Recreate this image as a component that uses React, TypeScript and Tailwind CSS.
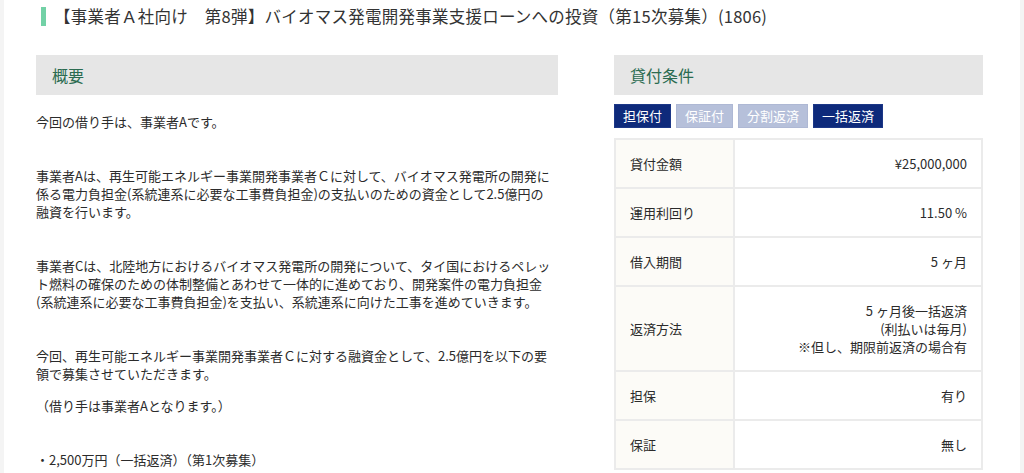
import React from 'react';

interface Term {
  label: string;
  value: React.ReactNode;
}

const tags = [
  { name: '担保付', on: true },
  { name: '保証付', on: false },
  { name: '分割返済', on: false },
  { name: '一括返済', on: true },
];

const terms: Term[] = [
  { label: '貸付金額', value: '¥25,000,000' },
  { label: '運用利回り', value: '11.50 %' },
  { label: '借入期間', value: '5 ヶ月' },
  {
    label: '返済方法',
    value: (
      <>
        5 ヶ月後一括返済
        <br />
        (利払いは毎月)
        <br />
        ※但し、期限前返済の場合有
      </>
    ),
  },
  { label: '担保', value: '有り' },
  { label: '保証', value: '無し' },
];

const SectionHead: React.FC<{ title: string }> = ({ title }) => (
  <div className="h-[40px] bg-[#e6e6e6] pl-4 flex items-center text-[16px] text-[#2b6b50]">{title}</div>
);

// lines are broken by hand so they wrap where the original page does
const Lines: React.FC<{ lines: string[]; className?: string }> = ({ lines, className = '' }) => (
  <p className={`whitespace-nowrap ${className}`}>
    {lines.map((l, i) => (
      <React.Fragment key={i}>
        {i > 0 && <br />}
        {l}
      </React.Fragment>
    ))}
  </p>
);

export default function App() {
  return (
    <div
      className="w-[1024px] h-[473px] overflow-hidden bg-[#f4f4f4] px-[4px] text-[#2b2b2b]"
      style={{ fontFamily: '"Noto Sans CJK JP", "Noto Sans", sans-serif' }}
    >
      <div className="h-full bg-white pl-[32px] pr-[37px]">
        {/* title */}
        <div className="flex items-center h-[32px] pl-[5px]">
          <div className="w-[5px] h-[19px] bg-[#72d1a6] mr-[8px]" />
          <h1 className="text-[16.5px] leading-[20px] tracking-[0.25px] text-[#333] whitespace-nowrap">
            【事業者Ａ社向け　第8弾】バイオマス発電開発事業支援ローンへの投資（第15次募集）(1806)
          </h1>
        </div>

        <div className="flex gap-[56px] mt-[23px]">
          {/* overview */}
          <div className="w-[522px] text-[13px] leading-[18px]">
            <SectionHead title="概要" />
            <p className="mt-[18px]">今回の借り手は、事業者Aです。</p>
            <Lines
              className="mt-[36px]"
              lines={[
                '事業者Aは、再生可能エネルギー事業開発事業者Ｃに対して、バイオマス発電所の開発に',
                '係る電力負担金(系統連系に必要な工事費負担金)の支払いのための資金として2.5億円の',
                '融資を行います。',
              ]}
            />
            <Lines
              className="mt-[36px]"
              lines={[
                '事業者Cは、北陸地方におけるバイオマス発電所の開発について、タイ国におけるペレッ',
                'ト燃料の確保のための体制整備とあわせて一体的に進めており、開発案件の電力負担金',
                '(系統連系に必要な工事費負担金)を支払い、系統連系に向けた工事を進めていきます。',
              ]}
            />
            <Lines
              className="mt-[36px]"
              lines={[
                '今回、再生可能エネルギー事業開発事業者Ｃに対する融資金として、2.5億円を以下の要',
                '領で募集させていただきます。',
              ]}
            />
            <p className="mt-[14px]">（借り手は事業者Aとなります。）</p>
            <p className="mt-[36px]">・2,500万円（一括返済）（第1次募集）</p>
          </div>

          {/* loan terms */}
          <div className="w-[369px] text-[13px] leading-[18px]">
            <SectionHead title="貸付条件" />
            <div className="flex gap-[5px] mt-[9px]">
              {tags.map((t) => (
                <span
                  key={t.name}
                  className={`h-[24px] px-[8px] flex items-center text-white border ${
                    t.on ? 'bg-[#0e2a7b] border-[#1c3787]' : 'bg-[#b6c0da] border-[#aeb8d4]'
                  }`}
                >
                  {t.name}
                </span>
              ))}
            </div>
            <table className="w-full mt-[10px] border-collapse border-2 border-[#ebebeb]">
              <tbody>
                {terms.map((row) => (
                  <tr key={row.label}>
                    <td className="w-[119px] bg-[#fcfbf7] border-2 border-[#ebebeb] pl-[14px] pt-[15px] pb-[14px] align-middle">
                      {row.label}
                    </td>
                    <td className="border-2 border-[#ebebeb] pr-[14px] pt-[15px] pb-[14px] text-right align-middle">
                      {row.value}
                    </td>
                  </tr>
                ))}
              </tbody>
            </table>
          </div>
        </div>
      </div>
    </div>
  );
}
